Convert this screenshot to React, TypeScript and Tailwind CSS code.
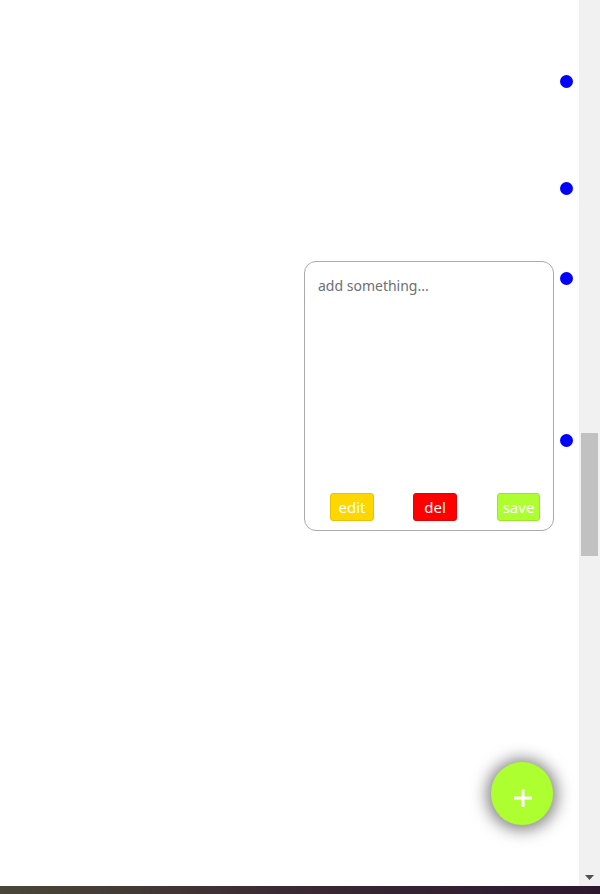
import React from 'react';

const Dot = ({ className }: { className: string }) => (
  <div className={`w-[13px] h-[13px] rounded-full bg-[#0000ff] ${className}`} />
);

export default function App() {
  return (
    <div className="w-[600px] h-[894px] flex flex-col bg-white overflow-hidden font-['Noto_Sans',sans-serif]">
      <div className="flex h-[886px]">
        {/* page content */}
        <div className="relative flex-1 flex items-start justify-end pr-[6px]">
          {/* note card */}
          <div className="mt-[261px] w-[250px] h-[270px] border border-[#aaaaaa] rounded-[12px] flex flex-col">
            <textarea
              placeholder="add something..."
              className="flex-1 resize-none outline-none bg-transparent px-[13px] pt-[13px] text-[14px] text-gray-700 placeholder:text-[#6b6f76]"
            />
            <div className="flex items-center pl-[25px] pb-[9px]">
              <button className="w-[44px] h-[28px] rounded-[3px] bg-[#ffd700] border border-[#e8c400] text-white text-[15px] leading-none">
                edit
              </button>
              <button className="ml-[39px] w-[44px] h-[28px] rounded-[3px] bg-[#ff0000] border border-[#e60000] text-white text-[15px] leading-none">
                del
              </button>
              <button className="ml-[40px] w-[43px] h-[28px] rounded-[3px] bg-[#adff2f] border border-[#9be628] text-white text-[15px] leading-none">
                save
              </button>
            </div>
          </div>

          {/* timeline dots */}
          <div className="ml-[6px] flex flex-col">
            <Dot className="mt-[75px]" />
            <Dot className="mt-[94px]" />
            <Dot className="mt-[77px]" />
            <Dot className="mt-[149px]" />
          </div>

          {/* add button */}
          <button className="absolute right-[26px] bottom-[61px] w-[62px] h-[63px] rounded-full bg-[#adff2f] shadow-[0_1px_16px_4px_rgba(0,0,0,0.5)] flex items-center justify-center pt-[8px] pl-[2px]">
            <svg width="20" height="20" viewBox="0 0 20 20">
              <path d="M10 1v18M1 10h18" stroke="white" strokeWidth="3" />
            </svg>
          </button>
        </div>

        {/* scrollbar */}
        <div className="w-[21px] bg-[#f1f1f1] flex flex-col">
          <div className="h-[433px]" />
          <div className="mx-[2px] h-[123px] bg-[#c1c1c1]" />
          <div className="flex-1" />
          <div className="h-[17px] flex items-center justify-center">
            <svg width="9" height="5" viewBox="0 0 9 5">
              <path d="M0 0h9L4.5 5z" fill="#505050" />
            </svg>
          </div>
        </div>
      </div>
      <div className="h-[8px] bg-gradient-to-r from-[#4a4737] via-[#3a2833] to-[#2d1830]" />
    </div>
  );
}
